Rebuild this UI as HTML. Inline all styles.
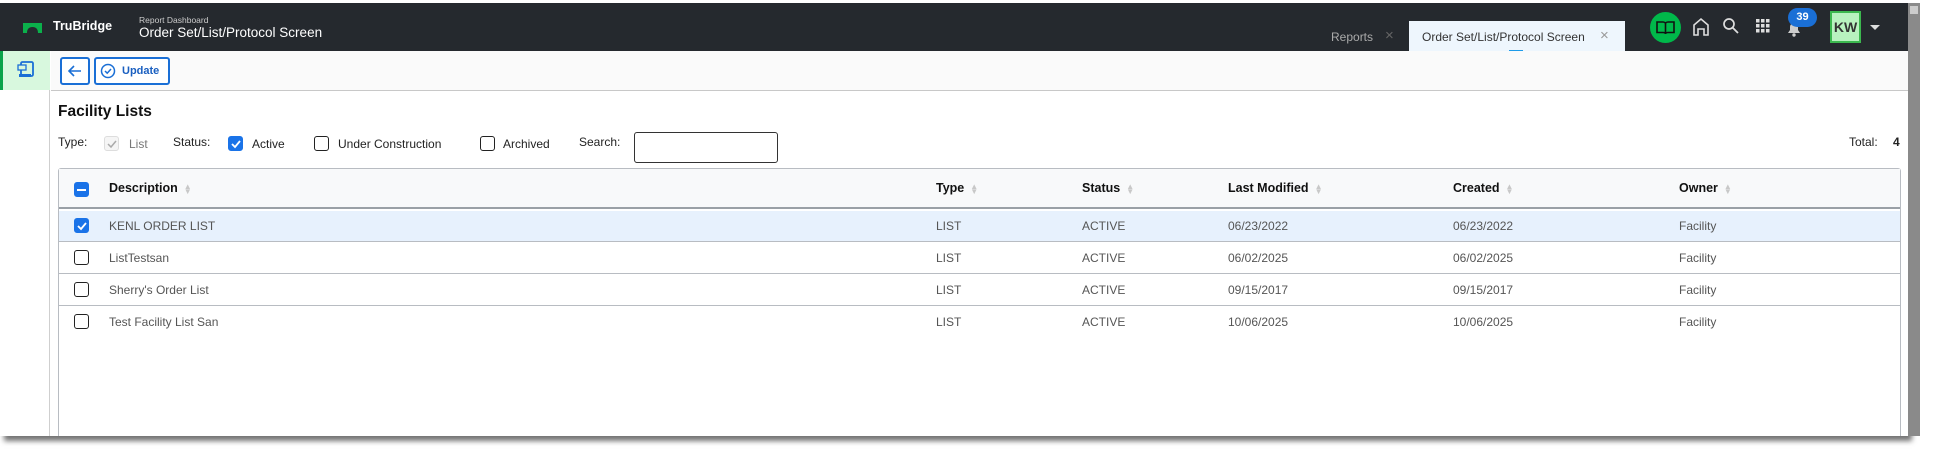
<!DOCTYPE html>
<html><head><meta charset="utf-8"><style>
*{box-sizing:border-box;margin:0;padding:0}
body{width:1933px;height:449px;background:#fff;font-family:"Liberation Sans",sans-serif;position:relative;overflow:hidden;color:#222}
.frame{position:absolute;left:0;top:3px;width:1908px;height:433px;background:#fff;box-shadow:4px 5px 5px rgba(0,0,0,.55);overflow:hidden}
.a{position:absolute;white-space:nowrap}
.top{position:absolute;left:0;top:0;width:1908px;height:48px;background:#25292e}
.sb{position:absolute;left:1908px;top:3px;width:12px;height:433px;background:#8a8a8a}
.cb{position:absolute;width:15px;height:15px;border:1.5px solid #222;border-radius:3px;background:#fff}
.cb.on{background:#1a73e8;border-color:#1a73e8}
.th{font-weight:bold;font-size:12.5px;color:#111}
.td{font-size:12px;color:#555}
.sort{display:inline-block;margin-left:6px;color:#c8c8c8;font-size:8px;line-height:5px;vertical-align:middle}
</style></head><body>
<div class="frame">
 <div class="top">
  <svg class="a" style="left:23px;top:20px" width="19" height="10"><path d="M0 0h19v10h-4c0-4-2-6-5.5-6S4 6 4 10H0z" fill="#0bb04b"/></svg>
  <div class="a" style="left:53px;top:16px;color:#fff;font-weight:bold;font-size:12.5px">TruBridge</div>
  <div class="a" style="left:139px;top:12px;color:#ccc;font-size:8.5px">Report Dashboard</div>
  <div class="a" style="left:139px;top:22px;color:#fff;font-size:13.5px">Order Set/List/Protocol Screen</div>
  <div class="a" style="left:1331px;top:27px;color:#aaa;font-size:12px">Reports</div>
  <div class="a" style="left:1385px;top:24px;color:#666;font-size:15px">×</div>
  <div class="a" style="left:1409px;top:18px;width:216px;height:30px;background:#eef6fd"></div>
  <div class="a" style="left:1422px;top:27px;color:#333;font-size:12px">Order Set/List/Protocol Screen</div>
  <div class="a" style="left:1600px;top:24px;color:#999;font-size:15px">×</div>
  <div class="a" style="left:1509px;top:47px;width:14px;height:2px;background:#1e9be9"></div>
  <div class="a" style="left:1650px;top:9px;width:31px;height:31px;border-radius:50%;background:#00b84a"></div>
  <svg class="a" style="left:1656px;top:17px" width="19" height="15"><path d="M1 2h6c1.5 0 2.5 1 2.5 2v10c0-1-1-1.5-2.5-1.5H1zM18 2h-6c-1.5 0-2.5 1-2.5 2v10c0-1 1-1.5 2.5-1.5h6z" fill="none" stroke="#111" stroke-width="1.6"/></svg>
  <svg class="a" style="left:1692px;top:14px" width="18" height="19"><path d="M2 18V8l7-6 7 6v10h-4v-6H6v6z" fill="none" stroke="#ddd" stroke-width="1.6"/></svg>
  <svg class="a" style="left:1722px;top:14px" width="17" height="17"><circle cx="7" cy="7" r="5" fill="none" stroke="#ddd" stroke-width="1.7"/><path d="M11 11l5 5" stroke="#ddd" stroke-width="1.8"/></svg>
  <svg class="a" style="left:1756px;top:16px" width="14" height="14" fill="#ddd"><rect x="0" y="0" width="3.5" height="3.5"/><rect x="5" y="0" width="3.5" height="3.5"/><rect x="10" y="0" width="3.5" height="3.5"/><rect x="0" y="5" width="3.5" height="3.5"/><rect x="5" y="5" width="3.5" height="3.5"/><rect x="10" y="5" width="3.5" height="3.5"/><rect x="0" y="10" width="3.5" height="3.5"/><rect x="5" y="10" width="3.5" height="3.5"/><rect x="10" y="10" width="3.5" height="3.5"/></svg>
  <svg class="a" style="left:1786px;top:17px" width="16" height="17"><path d="M2 13h12l-2-3V7a4 4 0 0 0-8 0v3z" fill="#ccc"/><circle cx="8" cy="15" r="1.7" fill="#ccc"/></svg>
  <div class="a" style="left:1788px;top:5px;width:29px;height:19px;border-radius:10px;background:#1a6fd6;color:#fff;font-weight:bold;font-size:11px;text-align:center;line-height:19px">39</div>
  <div class="a" style="left:1830px;top:8px;width:31px;height:32px;background:#b8f2bf;border:2px solid #3cb84f;color:#333;font-weight:bold;font-size:14px;text-align:center;line-height:28px">KW</div>
  <div class="a" style="left:1870px;top:22px;width:0;height:0;border-left:5px solid transparent;border-right:5px solid transparent;border-top:5px solid #ddd"></div>
 </div>
 <!-- sidebar -->
 <div class="a" style="left:0;top:48px;width:50px;height:385px;border-right:1px solid #cfcfcf;background:#fff"></div>
 <div class="a" style="left:0;top:48px;width:50px;height:39px;background:#d8f8de"></div>
 <div class="a" style="left:0;top:48px;width:3px;height:39px;background:#0aa34a"></div>
 <svg class="a" style="left:17px;top:58px" width="18" height="17"><rect x="4" y="1" width="12" height="14" rx="1.5" fill="none" stroke="#1a6fd6" stroke-width="1.8"/><rect x="1" y="4" width="8" height="5" fill="#d8f8de" stroke="#1a6fd6" stroke-width="1.3"/><rect x="2" y="13" width="12" height="3" fill="#1a6fd6"/></svg>
 <!-- toolbar -->
 <div class="a" style="left:51px;top:48px;width:1857px;height:40px;background:#fafafa;border-bottom:1px solid #c8c8c8"></div>
 <div class="a" style="left:60px;top:54px;width:30px;height:28px;border:2px solid #1a6fd6;border-radius:3px;background:#fff"></div>
 <svg class="a" style="left:67px;top:61px" width="16" height="14"><path d="M14 7H2M7 2L2 7l5 5" fill="none" stroke="#1a6fd6" stroke-width="1.6"/></svg>
 <div class="a" style="left:94px;top:54px;width:76px;height:28px;border:2px solid #1a6fd6;border-radius:3px;background:#fff"></div>
 <svg class="a" style="left:100px;top:60px" width="16" height="16"><circle cx="8" cy="8" r="6.5" fill="none" stroke="#1a6fd6" stroke-width="1.5"/><path d="M5 8l2.2 2.2L11 6" fill="none" stroke="#1a6fd6" stroke-width="1.5"/></svg>
 <div class="a" style="left:122px;top:62px;color:#1a5fc0;font-weight:bold;font-size:11px">Update</div>
 <!-- title -->
 <div class="a" style="left:58px;top:100px;font-weight:bold;font-size:15.5px;color:#111">Facility Lists</div>
 <div class="a" style="left:58px;top:132px;font-size:12px">Type:</div>
 <div class="cb" style="left:104px;top:133px;border-color:#ddd;background:#f5f5f5"></div>
 <svg class="a" style="left:106px;top:135px" width="12" height="12"><path d="M2 6l3 3 5-6" fill="none" stroke="#aaa" stroke-width="1.5"/></svg>
 <div class="a" style="left:129px;top:134px;font-size:12px;color:#777">List</div>
 <div class="a" style="left:173px;top:132px;font-size:12px">Status:</div>
 <div class="cb on" style="left:228px;top:133px"></div>
 <svg class="a" style="left:230px;top:135px" width="12" height="12"><path d="M2 6l3 3 5-6" fill="none" stroke="#fff" stroke-width="1.8"/></svg>
 <div class="a" style="left:252px;top:134px;font-size:12px">Active</div>
 <div class="cb" style="left:314px;top:133px"></div>
 <div class="a" style="left:338px;top:134px;font-size:12px">Under Construction</div>
 <div class="cb" style="left:480px;top:133px"></div>
 <div class="a" style="left:503px;top:134px;font-size:12px">Archived</div>
 <div class="a" style="left:579px;top:132px;font-size:12px">Search:</div>
 <div class="a" style="left:634px;top:129px;width:144px;height:31px;border:1px solid #333;border-radius:3px"></div>
 <div class="a" style="left:1849px;top:132px;font-size:12px">Total:</div>
 <div class="a" style="left:1893px;top:132px;font-size:12px;font-weight:bold">4</div>
 <!-- table -->
 <div class="a" style="left:58px;top:165px;width:1843px;height:280px;border:1px solid #b8bcc2;border-bottom:none;border-radius:3px 3px 0 0"></div>
 <div class="a" style="left:59px;top:166px;width:1841px;height:40px;background:#f8f9fa;border-bottom:2px solid #9aa0a6"></div>
 <div class="cb on" style="left:74px;top:179px"></div>
 <div class="a" style="left:77px;top:186px;width:9px;height:2px;background:#fff"></div>
 <div class="a th" style="left:109px;top:178px">Description<span class="sort">▲<br>▼</span></div>
 <div class="a th" style="left:936px;top:178px">Type<span class="sort">▲<br>▼</span></div>
 <div class="a th" style="left:1082px;top:178px">Status<span class="sort">▲<br>▼</span></div>
 <div class="a th" style="left:1228px;top:178px">Last Modified<span class="sort">▲<br>▼</span></div>
 <div class="a th" style="left:1453px;top:178px">Created<span class="sort">▲<br>▼</span></div>
 <div class="a th" style="left:1679px;top:178px">Owner<span class="sort">▲<br>▼</span></div>
 <div class="a" style="left:59px;top:208px;width:1841px;height:30px;background:#e7f1fd"></div>
 <div class="a" style="left:59px;top:238px;width:1841px;height:1px;background:#b8bcc2"></div>
 <div class="a" style="left:59px;top:270px;width:1841px;height:1px;background:#b8bcc2"></div>
 <div class="a" style="left:59px;top:302px;width:1841px;height:1px;background:#b8bcc2"></div>
 <div class="cb on" style="left:74px;top:215px"></div>
 <svg class="a" style="left:76px;top:217px" width="12" height="12"><path d="M2 6l3 3 5-6" fill="none" stroke="#fff" stroke-width="1.8"/></svg>
 <div class="cb" style="left:74px;top:247px"></div>
 <div class="cb" style="left:74px;top:279px"></div>
 <div class="cb" style="left:74px;top:311px"></div>
 <div class="a td" style="left:109px;top:216px">KENL ORDER LIST</div><div class="a td" style="left:936px;top:216px">LIST</div><div class="a td" style="left:1082px;top:216px">ACTIVE</div><div class="a td" style="left:1228px;top:216px">06/23/2022</div><div class="a td" style="left:1453px;top:216px">06/23/2022</div><div class="a td" style="left:1679px;top:216px">Facility</div>
 <div class="a td" style="left:109px;top:248px">ListTestsan</div><div class="a td" style="left:936px;top:248px">LIST</div><div class="a td" style="left:1082px;top:248px">ACTIVE</div><div class="a td" style="left:1228px;top:248px">06/02/2025</div><div class="a td" style="left:1453px;top:248px">06/02/2025</div><div class="a td" style="left:1679px;top:248px">Facility</div>
 <div class="a td" style="left:109px;top:280px">Sherry's Order List</div><div class="a td" style="left:936px;top:280px">LIST</div><div class="a td" style="left:1082px;top:280px">ACTIVE</div><div class="a td" style="left:1228px;top:280px">09/15/2017</div><div class="a td" style="left:1453px;top:280px">09/15/2017</div><div class="a td" style="left:1679px;top:280px">Facility</div>
 <div class="a td" style="left:109px;top:312px">Test Facility List San</div><div class="a td" style="left:936px;top:312px">LIST</div><div class="a td" style="left:1082px;top:312px">ACTIVE</div><div class="a td" style="left:1228px;top:312px">10/06/2025</div><div class="a td" style="left:1453px;top:312px">10/06/2025</div><div class="a td" style="left:1679px;top:312px">Facility</div>
</div>
<div class="sb"></div>
<div class="a" style="left:1910px;top:6px;width:8px;height:8px;background:#ccc"></div>
</body></html>
